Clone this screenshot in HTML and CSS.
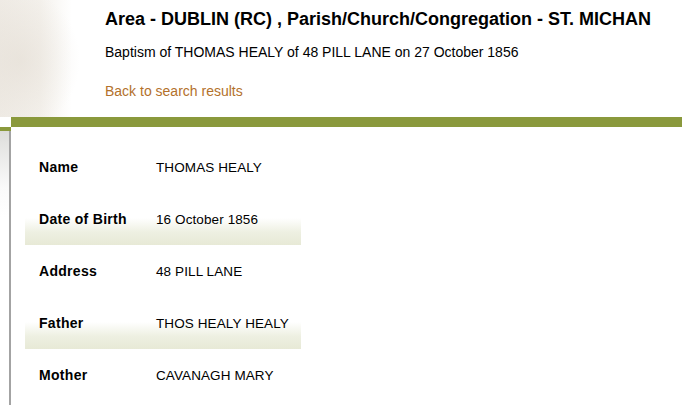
FILE: index.html
```html
<!DOCTYPE html>
<html>
<head>
<meta charset="utf-8">
<link rel="stylesheet" href="styles.css">
</head>
<body>
<div class="header">
  <div class="header-text">
    <h1 class="title">Area - DUBLIN (RC) , Parish/Church/Congregation - ST. MICHAN</h1>
    <p class="subtitle">Baptism of THOMAS HEALY of 48 PILL LANE on 27 October 1856</p>
    <a class="back" href="#">Back to search results</a>
  </div>
</div>
<div class="bar"></div>
<div class="content">
  <div class="side"></div>
  <div class="main">
    <div class="record">
      <div class="row"><span class="label">Name</span><span class="value">THOMAS HEALY</span></div>
      <div class="row shade"><span class="label">Date of Birth</span><span class="value">16 October 1856</span></div>
      <div class="row"><span class="label">Address</span><span class="value">48 PILL LANE</span></div>
      <div class="row shade"><span class="label">Father</span><span class="value">THOS HEALY HEALY</span></div>
      <div class="row"><span class="label">Mother</span><span class="value">CAVANAGH MARY</span></div>
    </div>
  </div>
</div>
</body>
</html>
```
FILE: styles.css
```css
html, body {
  margin: 0;
  padding: 0;
  background: #fff;
  font-family: "Liberation Sans", Arial, sans-serif;
  color: #000;
  overflow: hidden;
}
.header {
  height: 117px;
  background:
    radial-gradient(ellipse 60px 70px at 20px 60px, rgba(225,218,208,0.5), rgba(255,255,255,0) 100%),
    linear-gradient(to right, #efebe5 0, #f4f1ec 40px, #fbfaf8 60px, #fff 72px);
  box-sizing: border-box;
  padding: 8px 0 0 105px;
}
.title {
  margin: 0;
  font-size: 18px;
  font-weight: bold;
  line-height: 22px;
}
.subtitle {
  margin: 14px 0 0;
  font-size: 14px;
  line-height: 17px;
}
.back {
  display: inline-block;
  margin-top: 22px;
  font-size: 14px;
  line-height: 17px;
  color: #b3712b;
  text-decoration: none;
}
.bar {
  margin-left: 11px;
  height: 10px;
  background: #8a993c;
}
.content {
  display: flex;
  height: 278px;
}
.side {
  width: 9px;
  background: linear-gradient(to bottom, #8a993c 0, #8a993c 4px, #dcdcda 4px, #e6e6e4 20px, #fafafa 60px, #fff 90px);
  position: relative;
}
.side::after {
  content: "";
  position: absolute;
  top: 0;
  right: -2px;
  width: 2px;
  height: 4px;
  background: #8a993c;
}
.main {
  flex: 1;
  border-left: 2px solid #a3a3a3;
  margin-top: 4px;
  padding: 10px 0 0 14px;
}
.record {
  width: 276px;
}
.row {
  display: flex;
  align-items: center;
  height: 52px;
  font-size: 13.5px;
}
.row.shade {
  background: linear-gradient(to bottom, #fff 0, #fff 48%, #eef0e2 75%, #e7e9d6 100%);
}
.label {
  width: 131px;
  flex: none;
  box-sizing: border-box;
  padding-left: 14px;
  font-weight: bold;
  font-size: 14px;
  letter-spacing: 0.3px;
}
.value {
  flex: 1;
  letter-spacing: 0.1px;
}
```
